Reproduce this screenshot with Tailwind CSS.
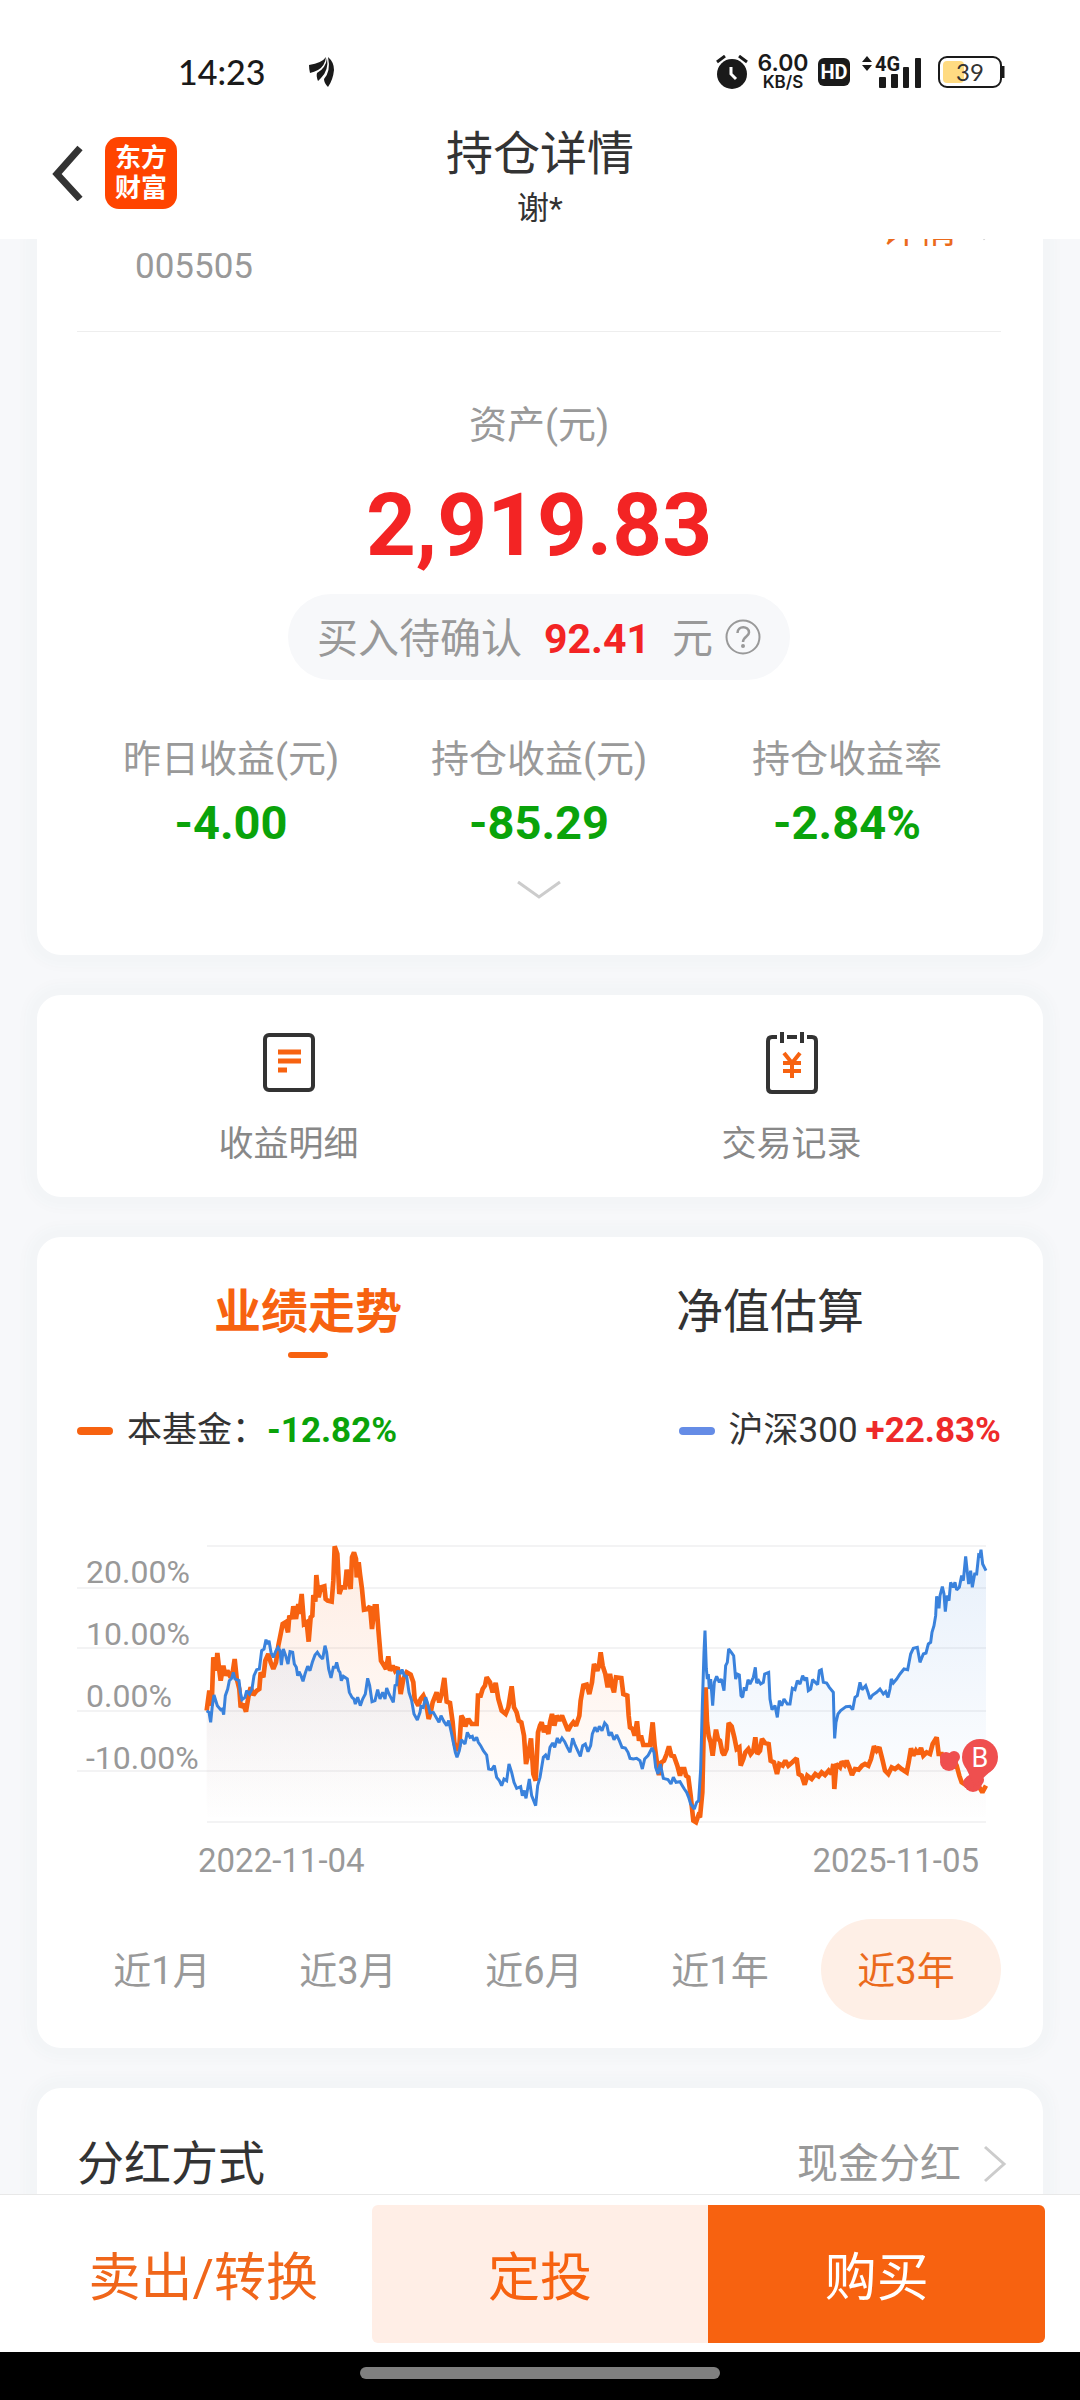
<!DOCTYPE html>
<html lang="zh-CN">
<head>
<meta charset="utf-8">
<meta name="viewport" content="width=device-width, initial-scale=1">
<title>持仓详情</title>
<script src="https://cdn.jsdelivr.net/npm/@tailwindcss/browser@4"></script>
</head>
<body class="flex h-screen flex-col overflow-hidden bg-white font-[Roboto,'Noto_Sans_CJK_SC',sans-serif] text-[#333]">

<header class="relative shrink-0 h-[239px] bg-white">
  <!-- status bar -->
  <div class="flex h-[120px] items-center justify-between pt-6 pl-[178px] pr-[75px] text-[#1a1a1a]">
    <div class="flex items-center gap-11">
      <time class="text-[34px] leading-10 font-[Lato,sans-serif] font-medium">14:23</time>
      <svg class="h-[30px] w-[26px]" viewBox="0 0 26 30" fill="currentColor" aria-hidden="true">
        <path d="M0 8 Q13 6 17 0 Q16 9 9 13 Q5 15 1 16 Q0 12 0 8Z"/>
        <path d="M18 1 Q20 13 12 21 L9 24 Q7 19 8 16 Q17 11 18 1Z"/>
        <path d="M19 0 Q25 5 25 13 Q24 23 19 30 Q15 26 15 22 Q22 14 19 0Z"/>
      </svg>
    </div>
    <div class="flex items-center">
      <svg class="h-[34px] w-8" viewBox="0 0 32 34" aria-hidden="true">
        <circle cx="16" cy="19" r="15" fill="#1a1a1a"/>
        <path d="M1 7 L9 1 M23 1 L31 7" stroke="#1a1a1a" stroke-width="3"/>
        <path d="M15 12 V19 L20 24" stroke="#fff" stroke-width="3" fill="none"/>
      </svg>
      <div class="ml-2 flex w-[54px] flex-col items-center font-[Inter,sans-serif]">
        <span class="text-[23px] leading-[20px] font-semibold">6.00</span>
        <span class="text-[17px] leading-[18px] font-semibold">KB/S</span>
      </div>
      <div class="ml-2 flex h-7 w-8 items-center justify-center rounded-md bg-[#1a1a1a] text-[20px] leading-7 font-bold text-white">HD</div>
      <svg class="ml-3 h-[34px] w-[60px] overflow-visible" viewBox="0 0 60 34" fill="#1a1a1a" aria-hidden="true">
        <path d="M0 7 L5 1 L10 7Z M0 10 L5 16 L10 10Z"/>
        <text x="13" y="16" font-size="20" font-weight="700" font-family="Roboto">4G</text>
        <rect x="17" y="22" width="7" height="11" rx="1"/>
        <rect x="29" y="19" width="7" height="14" rx="1"/>
        <rect x="41" y="12" width="6" height="21" rx="1"/>
        <rect x="53" y="3" width="6" height="30" rx="1"/>
      </svg>
      <svg class="ml-4 h-8 w-[67px]" viewBox="0 0 67 32" aria-label="电量 39">
        <rect x="5" y="5" width="21" height="22" rx="4" fill="#ffdb82"/>
        <rect x="1" y="1" width="62" height="30" rx="8" fill="none" stroke="#1a1a1a" stroke-width="2"/>
        <path d="M65 10 V22" stroke="#1a1a1a" stroke-width="3"/>
        <text x="32" y="25" text-anchor="middle" font-size="24" font-family="Lato" fill="#333">39</text>
      </svg>
    </div>
  </div>
  <!-- title bar -->
  <div class="grid grid-cols-[1fr_auto_1fr] items-start pl-[50px] pr-[50px]">
    <div class="flex items-center gap-[21px] pt-[17px]">
      <button type="button" aria-label="返回" class="h-[72px]">
        <svg class="h-14 w-[34px]" viewBox="0 0 34 56" fill="none" stroke="#333" stroke-width="7"><path d="M30 3 L7 29 L30 54"/></svg>
      </button>
      <div class="grid size-[72px] grid-cols-[26px_26px] content-center justify-center rounded-[14px] bg-[#ff4400] text-[26px] leading-[30px] font-bold text-white"><span>东</span><span>方</span><span>财</span><span>富</span></div>
    </div>
    <div class="flex flex-col items-center pt-[6px]">
      <h1 class="text-[47px] leading-[56px]">持仓详情</h1>
      <p class="pt-[6px] text-[32px] leading-10">谢*</p>
    </div>
    <span></span>
  </div>
</header>

<main class="min-h-0 flex-1 overflow-hidden bg-[#f7f8fa] px-[37px]">

  <!-- holdings summary -->
  <section class="rounded-b-3xl bg-white pr-[42px] pb-[55px] pl-10 shadow-[0_0_12px_12px_rgba(60,80,80,0.02)]">
    <div class="flex h-[93px] items-start justify-between border-b border-[#eee] pl-[58px]">
      <span class="text-[35px] leading-[56px] text-[#999]">005505</span>
      <a href="#" class="-mt-[30px] flex items-center gap-6 text-[38px] leading-10 text-[#eb6a1c]">详情
        <svg class="h-9 w-5" viewBox="0 0 20 36" fill="none" stroke="#ccc" stroke-width="3"><path d="M2 2 L17 15 L2 28"/></svg>
      </a>
    </div>
    <div class="flex flex-col items-center">
      <p class="mt-[73px] text-[38px] leading-10 text-[#999]">资产(元)</p>
      <p class="mt-[37px] text-[87px] leading-[87px] font-bold text-[#f32424]">2,919.83</p>
      <div class="mt-[25px] flex h-[86px] items-center rounded-full bg-[#f7f8fa] px-[29px] text-[41px] leading-[48px] text-[#999]">
        <span class="pt-1">买入待确认</span>
        <strong class="mx-[22px] pt-1 font-bold text-[#f32424]">92.41</strong>
        <span class="pt-1">元</span>
        <button type="button" aria-label="说明" class="ml-3">
          <svg class="size-9" viewBox="0 0 36 36" fill="none" stroke="#999" stroke-width="2">
            <circle cx="18" cy="18" r="16.5"/>
            <path d="M12.500 14 C12.500 6.500 24 6.500 24 13.500 C24 17.500 18 17.500 18 23" stroke-width="2.500"/>
            <circle cx="18" cy="27" r="1" fill="#999"/>
          </svg>
        </button>
      </div>
    </div>
    <dl class="mt-[59px] grid grid-cols-3 text-center">
      <div><dt class="text-[38px] leading-10 text-[#999]">昨日收益(元)</dt><dd class="mt-5 text-[47px] leading-[48px] font-bold text-[#0aa30a]">-4.00</dd></div>
      <div><dt class="text-[38px] leading-10 text-[#999]">持仓收益(元)</dt><dd class="mt-5 text-[47px] leading-[48px] font-bold text-[#0aa30a]">-85.29</dd></div>
      <div><dt class="text-[38px] leading-10 text-[#999]">持仓收益率</dt><dd class="mt-5 text-[47px] leading-[48px] font-bold text-[#0aa30a]">-2.84%</dd></div>
    </dl>
    <button type="button" aria-label="展开" class="mx-auto mt-[33px] block">
      <svg class="h-5 w-[46px]" viewBox="0 0 46 20" fill="none" stroke="#ccc" stroke-width="3"><path d="M2 2 L23 17 L44 2"/></svg>
    </button>
  </section>

  <!-- shortcuts -->
  <nav class="mt-10 grid grid-cols-2 rounded-3xl bg-white pt-9 pb-8 text-[35px] leading-10 text-[#888] shadow-[0_0_12px_12px_rgba(60,80,80,0.02)]">
    <a href="#" class="flex flex-col items-center gap-[30px]">
      <svg class="h-16 w-[52px]" viewBox="0 0 52 64" fill="none" aria-hidden="true">
        <rect x="2" y="4" width="48" height="55" rx="4" stroke="#333" stroke-width="4"/>
        <path d="M15 21 H38 M15 30 H38 M15 39 H24" stroke="#f76210" stroke-width="5"/>
      </svg>
      收益明细
    </a>
    <a href="#" class="flex flex-col items-center gap-[30px]">
      <svg class="h-16 w-[52px]" viewBox="0 0 52 64" fill="none" aria-hidden="true">
        <path d="M11 6 H6 Q2 6 2 10 V57 Q2 61 6 61 H46 Q50 61 50 57 V10 Q50 6 46 6 H41 M21 6 H31" stroke="#333" stroke-width="4"/>
        <path d="M16 1 V12 M36 1 V12" stroke="#333" stroke-width="4"/>
        <path d="M18 22 L26 32 L34 22 M17 32 H35 M17 40 H35 M26 31 V47" stroke="#f76210" stroke-width="4"/>
      </svg>
      交易记录
    </a>
  </nav>

  <!-- performance -->
  <section class="mt-10 rounded-3xl bg-white pt-[51px] pr-[42px] pb-7 pl-10 shadow-[0_0_12px_12px_rgba(60,80,80,0.02)]">
    <div role="tablist" class="grid grid-cols-2 text-[47px] leading-[48px]">
      <button type="button" role="tab" aria-selected="true" class="flex flex-col items-center gap-4 font-bold text-[#f76210]">业绩走势<span class="h-[6px] w-10 rounded-full bg-[#f76210]"></span></button>
      <button type="button" role="tab" aria-selected="false" class="flex flex-col items-center">净值估算</button>
    </div>
    <div class="mt-[53px] flex items-center justify-between text-[35px] leading-10">
      <p class="flex items-center"><i class="mr-[14px] h-2 w-9 rounded-sm bg-[#f76210]"></i>本基金：<strong class="font-bold text-[#0aa30a]">-12.82%</strong></p>
      <p class="flex items-center"><i class="mr-[14px] h-2 w-9 rounded-sm bg-[#658ce6]"></i>沪深300<strong class="ml-2 font-bold text-[#ee2a2a]">+22.83%</strong></p>
    </div>
    <svg class="mt-[88px] block w-full" viewBox="17 20 924 290" role="img" aria-label="业绩走势图">
      <defs>
        <linearGradient id="fundFill" gradientUnits="userSpaceOnUse" x1="0" y1="80" x2="0" y2="909"><stop stop-color="#f76210" stop-opacity=".12"/><stop offset="1" stop-color="#f76210" stop-opacity="0"/></linearGradient>
        <linearGradient id="indexFill" gradientUnits="userSpaceOnUse" x1="0" y1="80" x2="0" y2="909"><stop stop-color="#3a82dc" stop-opacity=".12"/><stop offset="1" stop-color="#3a82dc" stop-opacity="0"/></linearGradient>
      </defs>
      <path d="M147 27 H926 M17 69 H926 M17 129 H926 M17 192 H926 M17 252 H926 M147 303 H926" stroke="#f3f3f4" stroke-width="2"/>
      <g font-size="32" fill="#999" font-family="Roboto">
        <text x="26" y="64">20.00%</text><text x="26" y="126">10.00%</text><text x="26" y="188">0.00%</text><text x="26" y="250">-10.00%</text>
      </g>
      <g transform="scale(.33333)" fill="none" stroke-linejoin="miter" stroke-miterlimit="2">
        <path id="fundArea" fill="url(#fundFill)"/>
        <path id="indexArea" fill="url(#indexFill)"/>
        <path id="fundLine" stroke="#f76210" stroke-width="14"/>
        <path id="indexLine" stroke="#3a82dc" stroke-width="9"/>
      </g>
      <g fill="#ef4f4f">
        <circle cx="889" cy="243" r="9"/><circle cx="894" cy="238" r="6"/><circle cx="886" cy="239" r="6"/>
        <circle cx="913" cy="264" r="9"/><circle cx="909" cy="264" r="6"/><circle cx="918" cy="261" r="6"/>
        <circle cx="920" cy="238" r="18"/><path d="M905 247 L914 266 L920 262 L934 249Z"/>
      </g>
      <text x="920" y="248" text-anchor="middle" font-size="27" fill="#fff" font-family="Roboto">B</text>
    </svg>
    <div class="mt-3 flex justify-between pr-[22px] pl-[121px] text-[33px] leading-10 text-[#999]"><time>2022-11-04</time><time>2025-11-05</time></div>
    <div class="mt-[38px] grid grid-cols-5 gap-[6px] text-[38px] leading-10 text-[#999]">
      <button type="button" class="h-[101px] rounded-full pt-[2px] pr-[10px]">近1月</button>
      <button type="button" class="h-[101px] rounded-full pt-[2px] pr-[10px]">近3月</button>
      <button type="button" class="h-[101px] rounded-full pt-[2px] pr-[10px]">近6月</button>
      <button type="button" class="h-[101px] rounded-full pt-[2px] pr-[10px]">近1年</button>
      <button type="button" aria-pressed="true" class="h-[101px] rounded-full bg-[#feefe6] pt-[2px] pr-[10px] text-[#eb6a1c]">近3年</button>
    </div>
  </section>

  <!-- dividend method -->
  <section class="mt-10 rounded-3xl bg-white pt-[52px] pr-9 pb-12 pl-10 shadow-[0_0_12px_12px_rgba(60,80,80,0.02)]">
    <div class="flex items-center justify-between leading-[48px]">
      <h2 class="text-[47px]">分红方式</h2>
      <a href="#" class="flex items-center gap-[22px] text-[41px] text-[#999]">现金分红
        <svg class="h-[38px] w-6" viewBox="0 0 24 38" fill="none" stroke="#ccc" stroke-width="3"><path d="M2 2 L21 19 L2 36"/></svg>
      </a>
    </div>
  </section>
</main>

<footer class="relative shrink-0">
  <div class="grid grid-cols-3 border-t border-[#e8e8e8] bg-white px-[35px] pt-[10px] pb-[9px] text-[52px] leading-[60px]">
    <button type="button" class="h-[138px] pt-[10px] text-[#f0661a]">卖出/转换</button>
    <button type="button" class="h-[138px] rounded-l-md bg-[#ffeee6] pt-[10px] text-[#f76210]">定投</button>
    <button type="button" class="h-[138px] rounded-r-md bg-[#f76210] pt-[10px] text-white">购买</button>
  </div>
  <div class="flex h-12 justify-center bg-black pt-[15px]"><span class="h-3 w-1/3 rounded-full bg-[#808080]"></span></div>
</footer>

<script>
  // Each series comes in two halves; the second half starts 1440 chart units to the right.
  const series = {
    fund: [
      "440,575 448,515 455,560 460,415 468,455 472,402 478,455 482,485 490,440 496,470 502,455 512,475 518,460 524,420 530,478 538,510 542,565 550,555 558,578 565,535 572,505 580,528 590,515 598,510 602,460 610,475 616,425 625,405 632,430 640,450 648,430 655,380 662,345 668,315 676,310 684,340 688,290 695,300 700,262 708,300 715,255 718,285 725,225 732,315 740,310 746,368 752,295 757,290 760,228 766,248 769,168 776,235 783,205 793,202 797,240 803,245 815,248 820,185 824,82 832,105 838,225 845,205 855,205 860,152 865,180 872,210 876,115 882,100 888,120 890,175 896,130 900,165 906,210 912,272 922,270 930,262 936,330 944,262 950,262 955,330 963,425 972,440 978,450 985,412 990,455 998,440 1005,455 1013,445 1022,525 1030,480 1040,460 1052,467 1060,490 1064,540 1075,560 1082,540 1090,530 1098,550 1106,600 1112,580 1118,550 1130,520 1138,550 1145,525 1153,477 1160,548 1170,552 1178,610 1183,670 1190,695 1198,680 1204,590 1210,600 1216,622 1225,600 1235,615 1250,615 1254,530 1262,530 1268,510 1275,500 1280,475 1290,490 1298,520 1307,492 1315,540 1325,575 1337,585 1345,565 1355,502 1362,565 1370,580 1376,605 1384,610 1392,650 1398,735 1405,705 1413,658 1420,765 1427,785 1434,640",
      "0,620 5,610 12,640 18,620 25,645 30,610 36,585 43,620 50,590 58,605 66,590 74,610 84,635 92,620 100,610 108,620 118,590 122,545 130,500 140,497 148,525 156,490 162,435 172,455 177,440 182,400 188,440 196,465 203,505 210,465 216,500 222,520 228,475 244,477 250,525 262,530 266,590 270,625 278,630 284,650 291,607 297,665 303,650 310,678 330,678 338,610 344,680 352,740 357,768 364,730 372,725 380,705 387,682 394,710 402,712 412,740 420,770 426,750 433,750 438,770 445,775 452,830 460,905 468,910 475,890 480,895 487,820 492,600 497,505 501,610 506,650 512,670 518,710 524,660 528,632 534,660 540,665 547,700 552,708 560,690 566,612 575,622 583,655 590,690 598,685 602,740 610,720 616,700 625,690 632,705 640,695 646,655 652,705 660,695 666,660 675,672 686,675 692,725 702,730 711,765 718,735 728,740 736,725 745,740 757,730 770,718 776,765 785,770 794,797 802,770 815,780 826,765 836,772 845,760 855,768 866,755 875,765 880,735 883,810 889,735 900,745 905,728 914,738 920,725 928,745 936,768 945,750 956,752 966,740 975,735 985,740 993,720 1002,682 1010,695 1018,685 1028,725 1035,755 1045,765 1055,745 1065,750 1075,742 1085,750 1100,760 1106,730 1113,688 1120,710 1128,695 1135,705 1143,687 1150,710 1160,700 1170,705 1178,675 1190,655 1196,705 1205,705 1212,735 1225,715 1240,720 1250,740 1258,770 1265,790 1280,800 1300,790 1315,800 1327,820 1338,800"
    ],
    index: [
      "440,575 447,580 452,610 457,560 462,528 472,560 482,572 487,570 491,587 496,530 503,510 508,485 515,478 520,460 525,480 537,485 541,520 546,542 555,535 560,515 568,525 576,510 582,470 590,452 598,450 605,395 612,390 618,362 622,375 627,365 633,400 640,415 648,395 654,385 660,395 664,438 670,390 677,410 684,435 690,398 698,400 703,435 709,445 713,470 717,458 723,470 729,487 735,465 743,442 750,455 757,430 765,408 772,400 780,412 788,420 795,380 800,400 806,450 813,477 820,445 826,445 830,430 836,455 840,460 844,485 850,472 862,480 868,520 876,535 882,540 886,555 893,535 901,560 908,540 916,525 923,478 929,500 936,548 945,545 953,512 960,540 968,520 975,540 980,507 987,525 1000,550 1005,500 1010,498 1013,455 1020,465 1026,452 1033,470 1040,472 1047,520 1055,545 1062,585 1072,603 1080,580 1083,562 1090,565 1097,535 1105,560 1110,582 1120,580 1130,598 1137,610 1143,590 1152,608 1160,620 1166,605 1174,640 1180,670 1186,700 1191,715 1198,695 1204,662 1215,675 1222,640 1230,655 1237,652 1242,665 1250,655 1255,670 1262,680 1270,695 1280,708 1286,750 1295,752 1303,740 1310,775 1318,785 1325,800 1332,780 1340,785 1347,735 1355,760 1362,790 1370,808 1382,803 1387,830 1393,815 1398,838 1408,780 1415,830 1427,860 1433,800",
      "0,775 10,715 17,708 24,722 30,685 38,672 44,685 52,657 58,672 66,657 74,668 82,685 90,700 98,658 104,675 113,695 121,712 128,680 136,675 144,698 152,680 157,645 165,625 172,638 178,622 186,635 194,612 201,620 207,650 214,640 222,662 230,648 238,665 246,685 256,687 264,700 270,718 280,720 290,718 300,725 307,750 314,720 324,710 336,687 342,700 347,745 354,765 361,735 370,778 384,782 393,795 400,775 408,790 420,788 427,800 433,810 440,820 446,835 452,855 463,870 470,850 476,845 482,750 487,560 492,400 495,335 499,450 502,480 505,465 508,510 512,480 518,560 523,490 530,472 538,490 544,480 552,515 557,440 562,430 566,390 574,400 581,410 587,480 592,465 598,468 603,530 608,535 613,505 618,515 624,482 630,495 640,475 646,445 650,492 656,485 662,495 670,490 674,465 686,460 690,540 696,572 705,560 712,595 718,545 725,560 732,540 742,555 750,555 757,508 765,512 772,485 780,495 788,470 795,485 800,475 805,515 812,510 818,482 826,490 833,497 838,455 844,452 850,490 860,492 868,505 880,520 882,600 884,658 888,610 894,585 902,575 918,563 930,562 938,572 945,535 952,530 960,490 966,512 977,500 984,520 990,540 998,528 1010,520 1020,510 1030,525 1037,518 1044,535 1050,510 1054,480 1060,492 1070,480 1080,465 1092,450 1103,452 1112,405 1120,388 1132,385 1140,430 1150,405 1158,402 1165,375 1172,370 1176,340 1182,320 1187,290 1190,232 1197,268 1200,230 1207,203 1212,225 1216,278 1221,230 1227,245 1232,190 1240,205 1245,190 1250,213 1258,205 1265,170 1270,185 1277,112 1282,160 1286,195 1292,155 1297,205 1304,165 1310,165 1316,108 1320,110 1323,92 1328,135 1338,155"
    ]
  };
  for (const [name, halves] of Object.entries(series)) {
    const points = halves.flatMap((half, i) => half.split(" ").map(p => {
      const [x, y] = p.split(",").map(Number);
      return (x + i * 1440) + " " + y;
    }));
    const line = "M" + points.join("L");
    document.getElementById(name + "Line").setAttribute("d", line);
    document.getElementById(name + "Area").setAttribute("d", line + "V909H440Z");
  }
</script>
</body>
</html>
